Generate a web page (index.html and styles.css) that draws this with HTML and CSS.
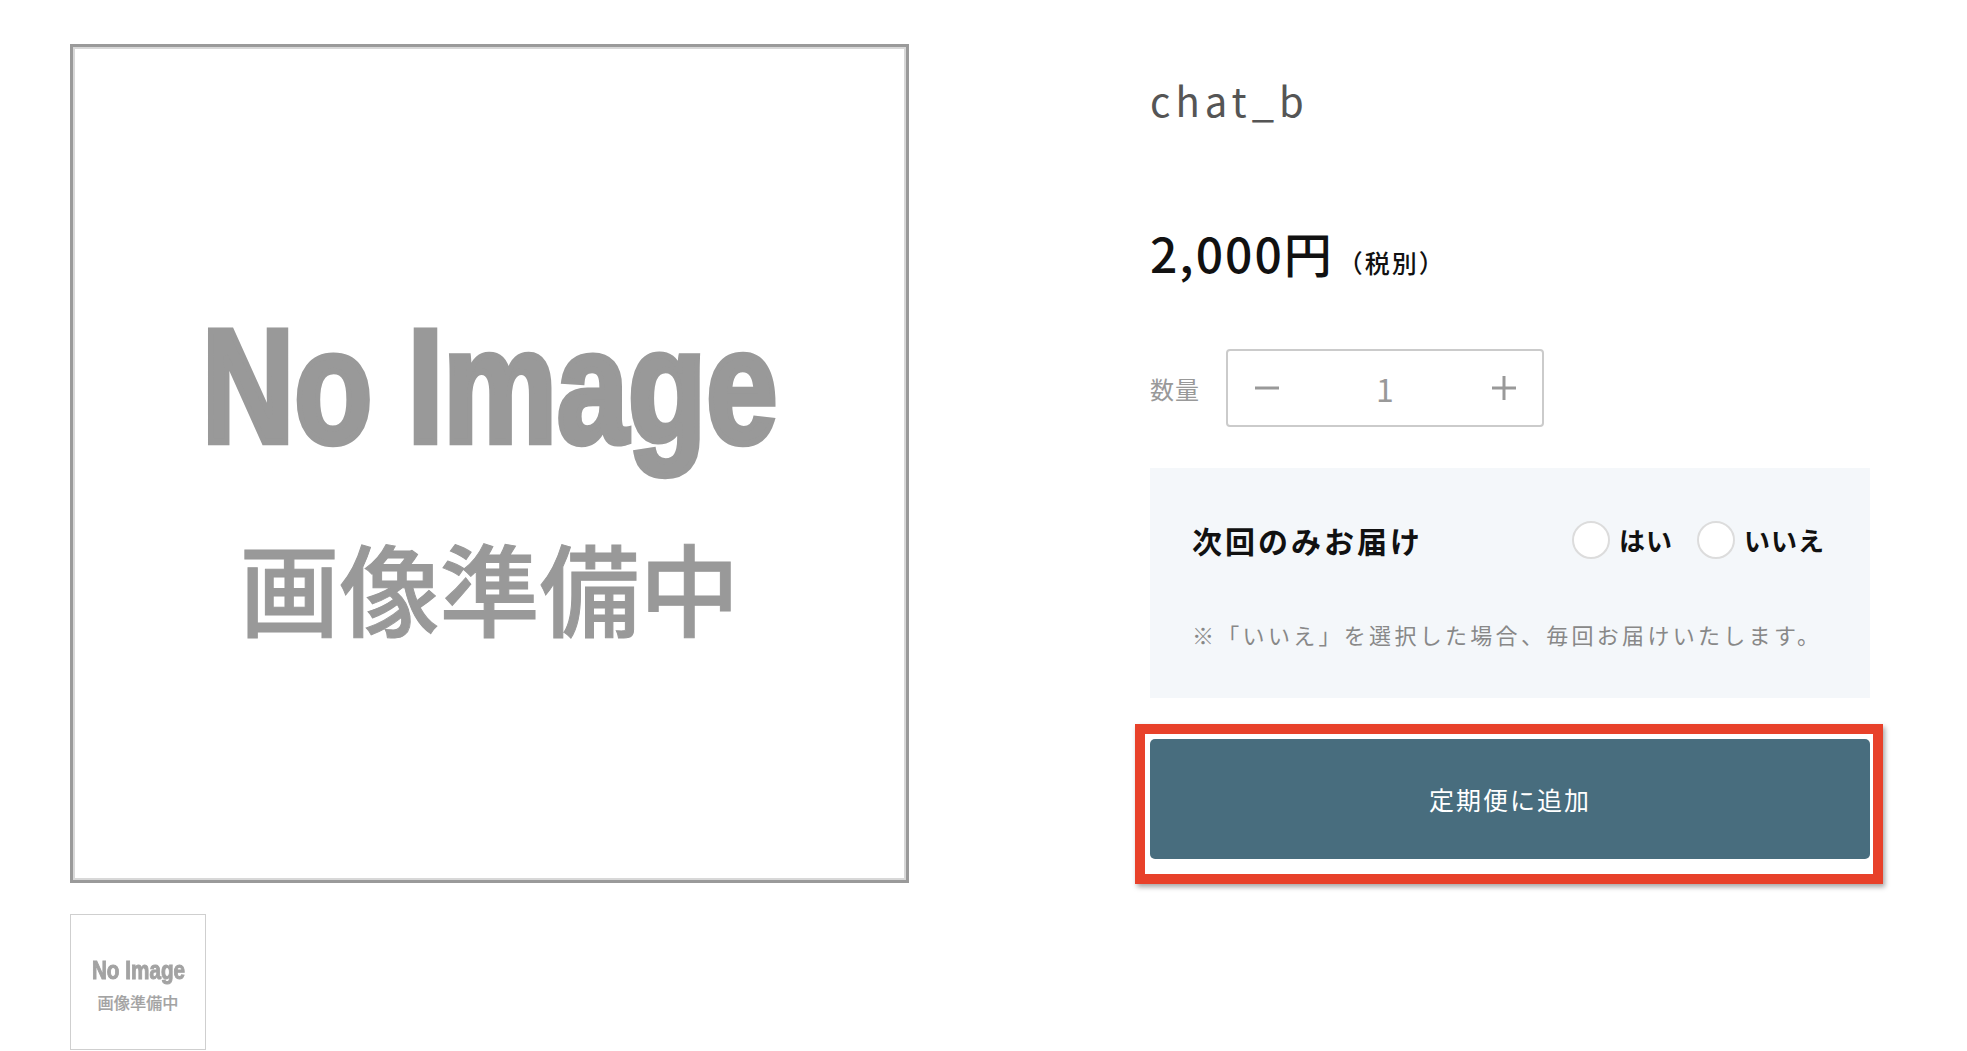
FILE: index.html
```html
<html>
<head>
    <meta charset="utf-8">
    <link rel="stylesheet" href="styles.css">
</head>
<body>
    <div class="product">
        <div class="gallery">
            <div class="main-image noimg">
                <span class="noimg-en">No Image</span>
                <span class="noimg-ja">画像準備中</span>
            </div>
            <div class="thumbs">
                <div class="thumb noimg">
                    <span class="noimg-en">No Image</span>
                    <span class="noimg-ja">画像準備中</span>
                </div>
            </div>
        </div>

        <div class="detail">
            <h1 class="name">chat_b</h1>
            <p class="price">2,000円<span class="tax">（税別）</span></p>

            <div class="qty">
                <span class="qty-label">数量</span>
                <div class="qty-box">
                    <button class="qty-btn" aria-label="minus">
                        <svg width="26" height="26" viewBox="0 0 26 26"><path d="M1 13h24" stroke="#999" stroke-width="3"/></svg>
                    </button>
                    <span class="qty-value">1</span>
                    <button class="qty-btn" aria-label="plus">
                        <svg width="26" height="26" viewBox="0 0 26 26"><path d="M1 13h24M13 1v24" stroke="#999" stroke-width="3"/></svg>
                    </button>
                </div>
            </div>

            <div class="once">
                <div class="once-head">
                    <span class="once-title">次回のみお届け</span>
                    <div class="once-options">
                        <label class="radio"><span class="radio-mark"></span>はい</label>
                        <label class="radio"><span class="radio-mark"></span>いいえ</label>
                    </div>
                </div>
                <p class="once-note">※「いいえ」を選択した場合、毎回お届けいたします。</p>
            </div>

            <div class="cart-frame">
                <button class="cart-btn">定期便に追加</button>
            </div>
        </div>
    </div>
</body>
</html>
```

FILE: styles.css
```css
body {
    margin: 0;
    font-family: "Noto Sans CJK JP", sans-serif;
    background-color: #fff;
    color: #111;
}

.product {
    display: flex;
    gap: 241px;
    padding: 44px 0 0 70px;
}

/* gallery */

.gallery {
    width: 839px;
    flex: none;
}

.noimg {
    display: flex;
    flex-direction: column;
    align-items: center;
    box-sizing: border-box;
    overflow: hidden;
    color: #999;
    padding-top: 2.57em;
}

.noimg-en {
    display: inline-block;
    font-family: "Liberation Sans", Arial, sans-serif;
    font-weight: 700;
    font-size: 1.66em;
    line-height: 1;
    white-space: nowrap;
    transform: scale(0.77, 0.97);
    -webkit-text-stroke: 0.04em #999;
}

.noimg-ja {
    font-size: 1em;
    font-weight: 500;
    line-height: 1;
    margin-top: 0.66em;
    white-space: nowrap;
    -webkit-text-stroke: 0.01em #999;
}

.main-image {
    width: 839px;
    height: 839px;
    font-size: 100px;
    border: 3px solid #9a9a9a;
    box-shadow: inset 0 0 0 2px #d8d8d8;
}

.main-image span {
    filter: blur(0.6px);
}

.thumbs {
    margin-top: 31px;
}

.thumb {
    width: 136px;
    height: 136px;
    font-size: 16.2px;
    border: 1px solid #cfcfcf;
    color: #a3a3a3;
}

.thumb .noimg-en,
.thumb .noimg-ja {
    -webkit-text-stroke-color: #a3a3a3;
}

/* detail */

.detail {
    width: 720px;
    flex: none;
}

.name {
    margin: 26px 0 0;
    font-size: 40px;
    font-weight: 400;
    line-height: 60px;
    letter-spacing: 5px;
    color: #555;
}

.price {
    margin: 86px 0 0;
    font-size: 48px;
    font-weight: 500;
    line-height: 72px;
    letter-spacing: 2px;
}

.tax {
    margin-left: 4px;
    font-size: 25px;
    font-weight: 500;
    line-height: 1;
    letter-spacing: 2px;
    text-spacing-trim: space-all;
}

.qty {
    display: flex;
    align-items: center;
    margin-top: 61px;
}

.qty-label {
    width: 76px;
    font-size: 24px;
    color: #999;
    letter-spacing: 1px;
}

.qty-box {
    display: flex;
    align-items: center;
    width: 318px;
    height: 78px;
    box-sizing: border-box;
    border: 2px solid #cbcbcb;
    border-radius: 4px;
}

.qty-btn {
    display: flex;
    align-items: center;
    justify-content: center;
    width: 77px;
    height: 100%;
    padding: 0;
    border: none;
    background: none;
    cursor: pointer;
}

.qty-value {
    flex: 1;
    text-align: center;
    font-size: 32px;
    color: #999;
}

.once {
    margin-top: 41px;
    padding: 52px 45px 47px 42px;
    background-color: #f4f7fa;
}

.once-head {
    display: flex;
    align-items: center;
    justify-content: space-between;
    height: 39px;
}

.once-title {
    font-size: 30px;
    font-weight: 700;
    letter-spacing: 3px;
}

.once-options {
    display: flex;
    gap: 24px;
}

.radio {
    display: flex;
    align-items: center;
    font-size: 26px;
    font-weight: 700;
    letter-spacing: 1px;
}

.radio-mark {
    width: 34px;
    height: 34px;
    margin-right: 9px;
    border: 2px solid #dcdcdc;
    border-radius: 50%;
    background-color: #fff;
}

.once-note {
    margin: 59px 0 0;
    font-size: 22px;
    line-height: 33px;
    letter-spacing: 3.3px;
    color: #888;
}

.cart-frame {
    width: 720px;
    margin: 26px 0 0 -15px;
    padding: 5px 3px 15px 5px;
    border: 10px solid #e8412a;
    box-shadow: 2px 3px 5px rgba(0, 0, 0, 0.35);
}

.cart-btn {
    display: block;
    width: 100%;
    height: 120px;
    border: none;
    border-radius: 5px;
    background-color: #486d7e;
    color: #fff;
    font-family: inherit;
    font-size: 25px;
    letter-spacing: 2px;
    cursor: pointer;
}
```
